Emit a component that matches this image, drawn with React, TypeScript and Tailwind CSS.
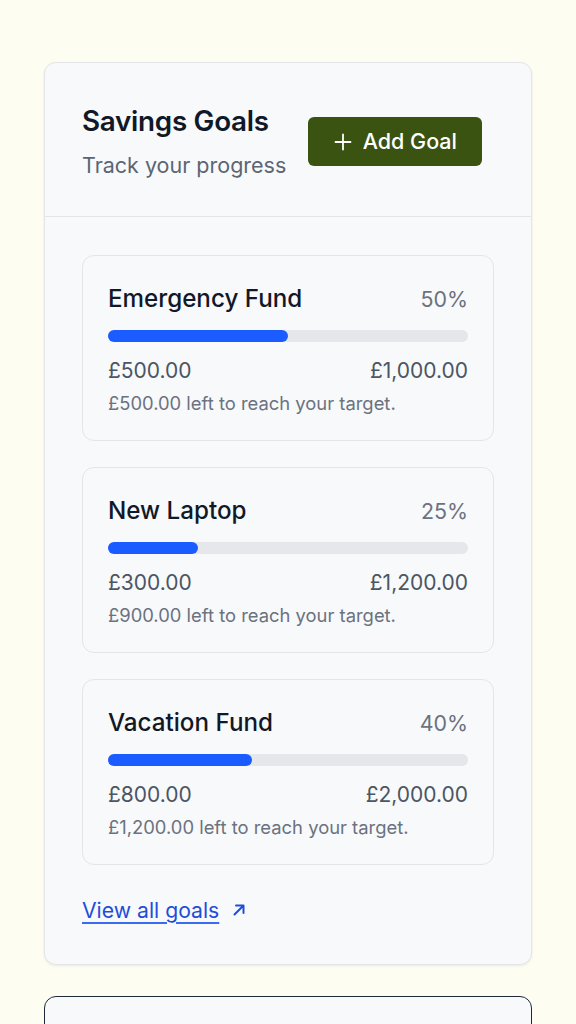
import React from "react";

const goals = [
  { name: "Emergency Fund", pct: 50, saved: "£500.00", target: "£1,000.00", left: "£500.00" },
  { name: "New Laptop", pct: 25, saved: "£300.00", target: "£1,200.00", left: "£900.00" },
  { name: "Vacation Fund", pct: 40, saved: "£800.00", target: "£2,000.00", left: "£1,200.00" },
];

export default function App() {
  return (
    <div
      className="h-[1024px] overflow-hidden bg-[#fdfdf2] px-[44px] pt-[62px] flex flex-col gap-[31px]"
      style={{ fontFamily: "Inter, 'Noto Sans', sans-serif" }}
    >
      <div className="shrink-0 rounded-[12px] border border-[#e3e5e8] bg-[#f8f9fb] shadow-[0_1px_3px_rgba(0,0,0,0.08)]">
        <div className="flex items-center gap-[22px] border-b border-[#e3e5e8] px-[37px] pt-[39px] pb-[35px]">
          <div className="flex flex-col">
            <h2 className="text-[27.8px] leading-[38px] font-semibold text-[#111827] tracking-[-0.01em]">Savings Goals</h2>
            <p className="mt-[9px] text-[21.5px] leading-[32px] text-[#5b6573]">Track your progress</p>
          </div>
          <button className="flex h-[49px] w-[174px] items-center justify-center gap-[11px] rounded-[6px] bg-[#3a5311] text-[21.5px] font-medium text-white">
            <svg width="18" height="18" viewBox="0 0 18 18" fill="none" stroke="currentColor" strokeWidth="1.8" strokeLinecap="round">
              <path d="M9 1.5v15M1.5 9h15" />
            </svg>
            Add Goal
          </button>
        </div>
        <div className="flex flex-col px-[37px] pt-[38px] pb-[39px]">
          <div className="flex flex-col gap-[26px]">
            {goals.map((g) => (
              <div key={g.name} className="rounded-[12px] border border-[#e3e5e8] bg-[#f8f9fb] px-[25px] pt-[25px] pb-[22px]">
                <div className="flex items-center justify-between">
                  <span className="text-[24.2px] leading-[36px] font-medium text-[#111827]">{g.name}</span>
                  <span className="text-[21.4px] leading-[36px] text-[#6b7280]">{g.pct}%</span>
                </div>
                <div className="mt-[13px] h-[12px] w-full rounded-full bg-[#e5e7eb]">
                  <div className="h-full rounded-full bg-[#1a5cff]" style={{ width: `${g.pct}%` }} />
                </div>
                <div className="mt-[12px] flex items-center justify-between text-[21px] leading-[34px] text-[#4b5563]">
                  <span>{g.saved}</span>
                  <span>{g.target}</span>
                </div>
                <p className="text-[18.4px] leading-[30px] text-[#6b7280]">{g.left} left to reach your target.</p>
              </div>
            ))}
          </div>
          <a href="#" className="mt-[30px] flex items-center gap-[12px] text-[21.2px] leading-[30px] text-[#1d4ed8]">
            <span className="underline underline-offset-[4px] decoration-[#3b6cf0]">View all goals</span>
            <svg width="16" height="16" viewBox="0 0 16 16" fill="none" stroke="currentColor" strokeWidth="2" strokeLinecap="round" strokeLinejoin="round">
              <path d="M3.5 12.5L12.5 3.5M5 3.5h7.5V11" />
            </svg>
          </a>
        </div>
      </div>
      <div className="h-[80px] shrink-0 rounded-[12px] border-[1.5px] border-[#1f2937] bg-[#f8f9fb]" />
    </div>
  );
}
